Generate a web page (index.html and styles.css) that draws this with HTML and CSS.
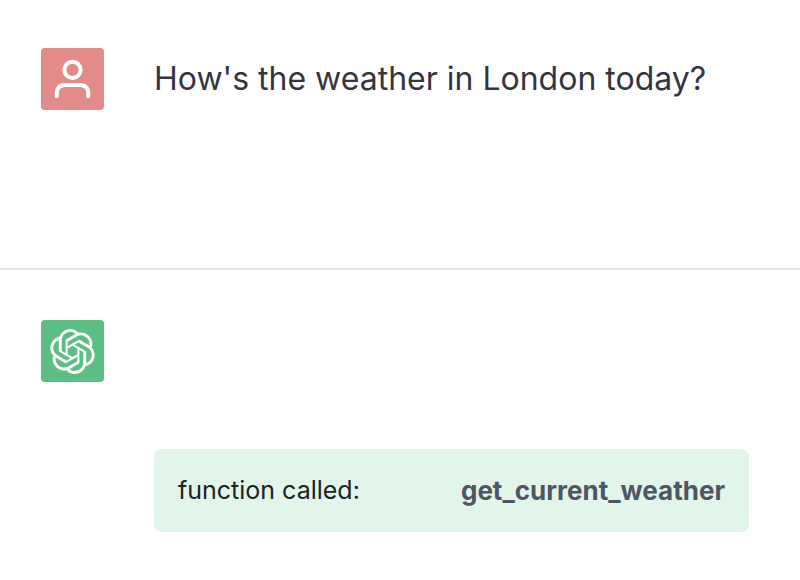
FILE: index.html
```html
<!DOCTYPE html>
<html lang="en">
<head>
<meta charset="utf-8">
<meta name="viewport" content="width=device-width, initial-scale=1">
<title>Chat</title>
<link rel="stylesheet" href="styles.css">
</head>
<body>
<main class="chat">
  <article class="message message-user">
    <div class="avatar avatar-user">
      <svg viewBox="0 0 62 62" fill="none" stroke="#fff" stroke-width="4" stroke-linecap="round" aria-hidden="true">
        <circle cx="31" cy="21.500" r="8"/>
        <path d="M15.500 47.500V45Q15.500 36.500 24 36.500H38Q46.500 36.500 46.500 45V47.500"/>
      </svg>
    </div>
    <p class="question">How's the weather in London today?</p>
  </article>
  <article class="message message-assistant">
    <div class="avatar avatar-assistant">
      <svg class="logo" viewBox="0 0 24 24" fill="#fff" aria-hidden="true">
        <path d="M22.2819 9.8211a5.9847 5.9847 0 0 0-.5157-4.9108 6.0462 6.0462 0 0 0-6.5098-2.9A6.0651 6.0651 0 0 0 4.9807 4.1818a5.9847 5.9847 0 0 0-3.9977 2.9 6.0462 6.0462 0 0 0 .7427 7.0966 5.98 5.98 0 0 0 .511 4.9107 6.051 6.051 0 0 0 6.5146 2.9001A5.9847 5.9847 0 0 0 13.2599 24a6.0557 6.0557 0 0 0 5.7718-4.2058 5.9894 5.9894 0 0 0 3.9977-2.9001 6.0557 6.0557 0 0 0-.7475-7.0729zm-9.022 12.6081a4.4755 4.4755 0 0 1-2.8764-1.0408l.1419-.0804 4.7783-2.7582a.7948.7948 0 0 0 .3927-.6813v-6.7369l2.02 1.1686a.071.071 0 0 1 .038.052v5.5826a4.504 4.504 0 0 1-4.4945 4.4944zm-9.6607-4.1254a4.4708 4.4708 0 0 1-.5346-3.0137l.142.0852 4.783 2.7582a.7712.7712 0 0 0 .7806 0l5.8428-3.3685v2.3324a.0804.0804 0 0 1-.0332.0615L9.74 19.9502a4.4992 4.4992 0 0 1-6.1408-1.6464zM2.3408 7.8956a4.485 4.485 0 0 1 2.3655-1.9728V11.6a.7664.7664 0 0 0 .3879.6765l5.8144 3.3543-2.0201 1.1685a.0757.0757 0 0 1-.071 0l-4.8303-2.7865A4.504 4.504 0 0 1 2.3408 7.872zm16.5963 3.8558L13.1038 8.364 15.1192 7.2a.0757.0757 0 0 1 .071 0l4.8303 2.7913a4.4944 4.4944 0 0 1-.6765 8.1042v-5.6772a.79.79 0 0 0-.407-.667zm2.0107-3.0231l-.142-.0852-4.7735-2.7818a.7759.7759 0 0 0-.7854 0L9.409 9.2297V6.8974a.0662.0662 0 0 1 .0284-.0615l4.8303-2.7866a4.4992 4.4992 0 0 1 6.6802 4.66zM8.3065 12.863l-2.02-1.1638a.0804.0804 0 0 1-.038-.0567V6.0742a4.4992 4.4992 0 0 1 7.3757-3.4537l-.142.0805L8.704 5.459a.7948.7948 0 0 0-.3927.6813zm1.0976-2.3654l2.602-1.4998 2.6069 1.4998v2.9994l-2.5974 1.4997-2.6067-1.4997Z"/>
      </svg>
    </div>
    <div class="call">
      <span class="call-label">function called:</span>
      <strong class="call-name">get_current_weather</strong>
    </div>
  </article>
</main>
</body>
</html>
```
FILE: styles.css
```css
* {
  box-sizing: border-box;
}

body {
  margin: 0;
  background: #fff;
  color: #343541;
  font-family: Inter, "Liberation Sans", sans-serif;
}

.message {
  display: grid;
  grid-template-columns: 63px minmax(0, 1fr);
  align-items: start;
  column-gap: 50px;
  padding: 48px 51px 48px 41px;
}

.message-user {
  padding-bottom: 158px;
  border-bottom: 2px solid #e3e3e3;
}

.message-assistant {
  padding-top: 50px;
}

.avatar {
  display: flex;
  align-items: center;
  justify-content: center;
  height: 62px;
  border-radius: 4px;
}

.avatar-user {
  background: #e38b88;
}

.avatar-assistant {
  background: #5bbf84;
}

.logo {
  width: 45px;
  height: 45px;
}

.question {
  margin: 0;
  font-size: 32px;
  line-height: 62px;
}

.call {
  display: flex;
  flex-wrap: wrap;
  align-items: center;
  justify-content: space-between;
  margin-top: 129px;
  padding: 24px;
  border-radius: 8px;
  background: #e1f5eb;
  font-size: 25px;
  line-height: 35px;
}

.call-label {
  color: #202123;
}

.call-name {
  color: #4f5563;
  font-size: 26px;
}
```
